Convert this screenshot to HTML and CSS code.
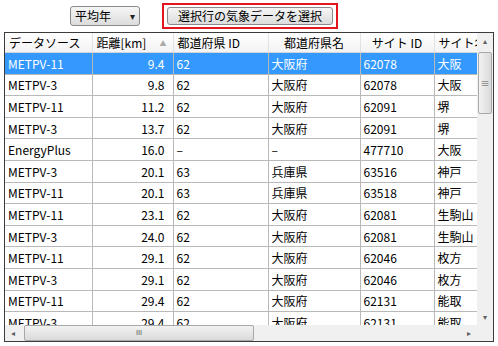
FILE: index.html
```html
<!DOCTYPE html>
<html lang="ja">
<head>
  <meta charset="UTF-8">
  <title>気象データ選択</title>
  <link rel="stylesheet" href="styles.css">
</head>
<body>
  <!-- 上部の操作バー -->
  <div class="toolbar">
    <div class="dropdown">
      <span>平均年</span>
      <span class="dropdown-arrow">&#9662;</span>
    </div>
    <div class="highlight">
      <button class="btn">選択行の気象データを選択</button>
    </div>
  </div>

  <div class="grid-box">
    <div class="grid-view">
      <table class="data-table">
        <colgroup>
          <col class="c1"><col class="c2"><col class="c3"><col class="c4"><col class="c5"><col class="c6">
        </colgroup>
        <thead>
          <tr>
            <th class="h-left">データソース</th>
            <th class="h-left sorted">距離[km]<span class="sort-arrow">&#9650;</span></th>
            <th class="h-left">都道府県 ID</th>
            <th>都道府県名</th>
            <th>サイト ID</th>
            <th class="h-left">サイト名</th>
          </tr>
        </thead>
        <tbody id="rows"></tbody>
      </table>
    </div>
    <div class="vscroll">
      <div class="sb-btn">&#9652;</div>
      <div class="vtrack">
        <div class="vthumb"><span class="grip-h">&#8801;</span></div>
      </div>
      <div class="sb-btn">&#9662;</div>
    </div>
    <div class="hscroll">
      <div class="sb-btn">&#9666;</div>
      <div class="htrack">
        <div class="hthumb"><span class="grip-v">III</span></div>
      </div>
      <div class="sb-btn">&#9656;</div>
    </div>
    <div class="corner"></div>
  </div>

  <script>
    const data = [
      ['METPV-11', '9.4', '62', '大阪府', '62078', '大阪'],
      ['METPV-3', '9.8', '62', '大阪府', '62078', '大阪'],
      ['METPV-11', '11.2', '62', '大阪府', '62091', '堺'],
      ['METPV-3', '13.7', '62', '大阪府', '62091', '堺'],
      ['EnergyPlus', '16.0', '–', '–', '477710', '大阪'],
      ['METPV-3', '20.1', '63', '兵庫県', '63516', '神戸'],
      ['METPV-11', '20.1', '63', '兵庫県', '63518', '神戸'],
      ['METPV-11', '23.1', '62', '大阪府', '62081', '生駒山'],
      ['METPV-3', '24.0', '62', '大阪府', '62081', '生駒山'],
      ['METPV-11', '29.1', '62', '大阪府', '62046', '枚方'],
      ['METPV-3', '29.1', '62', '大阪府', '62046', '枚方'],
      ['METPV-11', '29.4', '62', '大阪府', '62131', '能取'],
      ['METPV-3', '29.4', '62', '大阪府', '62131', '能取']
    ];

    const tbody = document.getElementById('rows');
    data.forEach((row, i) => {
      const tr = document.createElement('tr');
      if (i === 0) tr.className = 'selected';
      row.forEach((val, j) => {
        const td = document.createElement('td');
        td.textContent = val;
        if (j === 1) td.className = 'num';
        tr.appendChild(td);
      });
      tbody.appendChild(tr);
    });
  </script>
</body>
</html>
```

FILE: styles.css
```css
body {
  margin: 0;
  background-color: #ffffff;
  font-family: "Noto Sans CJK JP", "Liberation Sans", sans-serif;
  font-size: 12px;
  color: #000000;
}

.toolbar {
  display: flex;
  align-items: center;
  height: 32px;
  padding-left: 70px;
  gap: 22px;
}

.dropdown {
  display: flex;
  align-items: center;
  justify-content: space-between;
  width: 60px;
  height: 18px;
  padding: 0 4px 0 4px;
  border: 1px solid #8a8a8a;
  border-radius: 3px;
  background: linear-gradient(#f6f6f6, #dcdcdc);
  line-height: 18px;
}

.dropdown-arrow {
  font-size: 10px;
  color: #222;
}

.highlight {
  border: 2px solid #e4161b;
  padding: 2px 3px;
}

.btn {
  display: block;
  width: 166px;
  height: 18px;
  padding: 0;
  border: 1px solid #8a8a8a;
  border-radius: 3px;
  background: linear-gradient(#f6f6f6, #dcdcdc);
  font-family: "Noto Sans CJK JP", sans-serif;
  font-size: 12px;
  line-height: 16px;
  color: #000;
}

.grid-box {
  display: grid;
  grid-template-columns: 1fr 16px;
  grid-template-rows: 1fr 16px;
  height: 308px;
  margin: 0 4px 0 4px;
  border: 1px solid #3c3c3c;
}

.grid-view {
  overflow: hidden;
}

.data-table {
  table-layout: fixed;
  border-collapse: collapse;
  width: 489px;
}

.c1 { width: 87px; }
.c2 { width: 81px; }
.c3 { width: 95px; }
.c4 { width: 92px; }
.c5 { width: 74px; }
.c6 { width: 60px; }

.data-table th {
  height: 19px;
  padding: 0 4px;
  font-weight: normal;
  text-align: center;
  white-space: nowrap;
  overflow: hidden;
  background: linear-gradient(#ffffff, #f3f3f3);
  border-right: 1px solid #e2e2e2;
  border-bottom: 1px solid #d5d5d5;
}

.data-table th.h-left {
  text-align: left;
}

.sorted {
  position: relative;
}

.sort-arrow {
  position: absolute;
  right: 6px;
  top: 5px;
  font-size: 7px;
  color: #a8a8a8;
}

.data-table td {
  height: 20.6px;
  padding: 0 3px;
  white-space: nowrap;
  overflow: hidden;
  border: 1px solid #b9b9b9;
  border-top: none;
}

.data-table td:first-child {
  border-left: none;
}

.data-table td.num {
  text-align: right;
  padding-right: 8px;
}

.data-table tr.selected td {
  background-color: #3399ff;
  color: #ffffff;
}

.vscroll {
  display: flex;
  flex-direction: column;
  background-color: #f0f0f0;
}

.hscroll {
  display: flex;
  background-color: #f0f0f0;
}

.corner {
  background-color: #f0f0f0;
}

.sb-btn {
  width: 16px;
  height: 16px;
  flex: none;
  font-size: 8px;
  line-height: 16px;
  text-align: center;
  color: #606060;
}

.vtrack {
  flex: 1;
  padding-top: 3px;
}

.vthumb {
  height: 60px;
  margin: 0 1px;
  border: 1px solid #a8a8a8;
  border-radius: 2px;
  background: linear-gradient(90deg, #f2f2f2, #dadada);
  display: flex;
  align-items: center;
  justify-content: center;
}

.grip-h {
  font-size: 9px;
  color: #555;
}

.htrack {
  flex: 1;
  padding-left: 3px;
}

.hthumb {
  width: 228px;
  height: 14px;
  border: 1px solid #a8a8a8;
  border-radius: 2px;
  background: linear-gradient(#f2f2f2, #dadada);
  display: flex;
  align-items: center;
  justify-content: center;
}

.grip-v {
  font-family: "DejaVu Sans", sans-serif;
  font-size: 7px;
  color: #555;
}
```
